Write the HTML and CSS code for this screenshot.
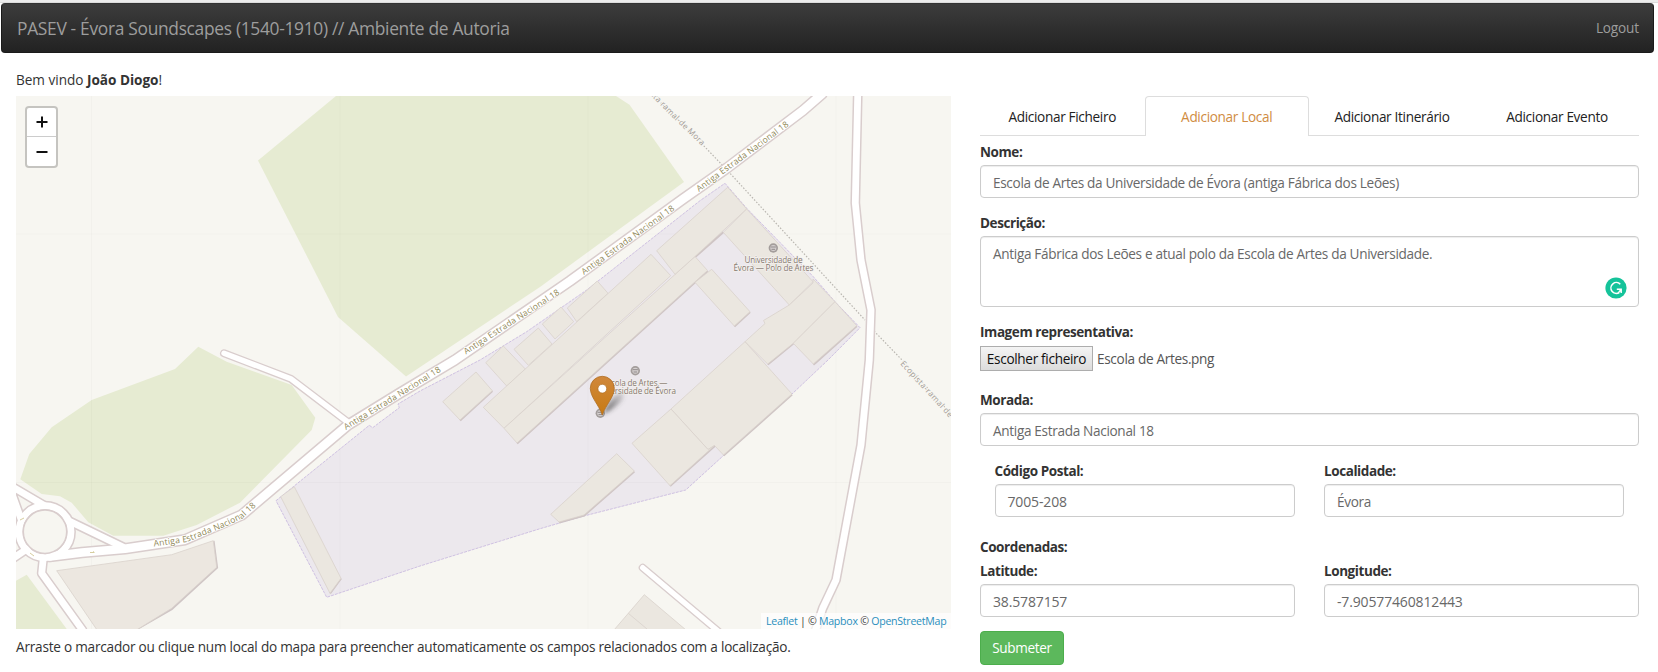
FILE: index.html
```html
<!DOCTYPE html>
<html lang="pt">
<head>
<meta charset="utf-8">
<title>PASEV - Évora Soundscapes</title>
<link rel="stylesheet" href="styles.css">
</head>
<body>
<nav class="navbar">
  <a class="brand">PASEV - Évora Soundscapes (1540-1910) // Ambiente de Autoria</a>
  <a class="logout">Logout</a>
</nav>
<main class="content">
  <section class="map-col">
    <p class="welcome">Bem vindo <b>João Diogo</b>!</p>
    <div class="map">
      <svg class="map-svg" viewBox="16 96 935 533" preserveAspectRatio="none">
        <defs>
          <path id="r1" d="M154 546.500 L187 542 L226 526.500 L243 518 L262 501"/>
          <path id="r2" d="M346 430 L400 397 L444 369.500"/>
          <path id="r3" d="M466 354.500 L563 292"/>
          <path id="r4" d="M584 275 L678 207.500"/>
          <path id="r5" d="M699 192 L792 123.500"/>
          <path id="p1" d="M650 94.500 L672 117 L706 150"/>
          <path id="p2" d="M900 364 L956 425"/>
          <linearGradient id="pin" x1="0" y1="0" x2="0" y2="1"><stop offset="0" stop-color="#d0883c"/><stop offset="1" stop-color="#c87a12"/></linearGradient>
          <filter id="soft" x="-50%" y="-50%" width="200%" height="200%"><feGaussianBlur stdDeviation="2.2"/></filter>
          <linearGradient id="shade" x1="0" y1="1" x2="1" y2="0"><stop offset="0" stop-color="#333" stop-opacity=".8"/><stop offset="1" stop-color="#555" stop-opacity=".15"/></linearGradient>
          <g id="poi"><circle r="4.700" fill="#a39d9b"/><circle r="3" fill="#d5d0d0"/><path d="M-2.600 -1H2.600M-1.800 1.300H1.800" stroke="#8f8989" stroke-width="1"/></g>
        </defs>
        <g class="green">
          <path d="M336 96 258 160.500 338 317 406 376.500 540 287 684 182 629.500 104.700 616 96Z"/>
          <path d="M198.300 346.700 175 369 91.700 400 51.700 427.300 29.300 454 20.300 479.300 41.700 494 60 496.300 71.700 502.700 88.300 522.300 113.300 535.700H163.300L196.700 525 240 502.700 311.700 430 315.300 417.700 291.700 385 226.700 361.700Z"/>
          <path d="M26.700 574.700 16 580.700V629H66.700Z"/>
        </g>
        <path class="campus" d="M276 500.700 369.300 425.300 372.700 427.700 399.300 407.700 398 404 420 391 480 360 526.700 331.700 586.700 290 700 200.700 725 183.300 746.700 208.300 813.300 276.700 835 301.700 860 327.700 828 360 791.700 394.300 723.300 455.700 685.700 490 585 515.700 540 528.700 420 566 326.700 597.300Z"/>
        <g class="tiles"><path d="M91.500 96V629M340 96V629M588 96V629M836 96V629M16 234H951M16 482.500H951"/></g>
        <g class="shadow">
          <path d="M341 578.300 330 593.300M492.300 391 460 420.500M707.500 271 517 443.500M723.500 232 695 257M750 312 734.300 326.500M856.700 326 816 362.500 813.300 364.500M793.300 343.500 767.700 364.500M792 394.500 723.500 455.500M714.700 446 670 486M634.300 471.500 584 515.500 559 522.500M213.500 541 217 567.500 171.700 609 137 629"/>
        </g>
        <g class="building">
          <path d="M280.700 496.700 294.300 486.700 341 578.300 330 593.300Z"/>
          <path d="M476 372 492.300 390.700 460 420 442.700 401.700Z"/>
          <path d="M503.300 346 525.300 369 506.700 386 485.700 362.700Z"/>
          <path d="M538.300 328 552 344 528.300 365.300 514 349.300Z"/>
          <path d="M561 307 573.700 321.700 555 339 542.300 324Z"/>
          <path d="M597.300 281 608 293.300 576.700 321.700 567.300 308Z"/>
          <path d="M651 254.300 670.700 275.700 504 428.300 483.300 407.300Z"/>
          <path d="M504 428.300 695 256.500 707.500 270.500 517 443Z"/>
          <path d="M727.700 187.300 746.700 209 695 256.500 675 274.300 656.700 250.700Z"/>
          <path d="M746.700 209 813 281.700 789.300 305 723.300 232.300Z"/>
          <path d="M711.700 269.300 750 311.700 734.300 326 695 282.300Z"/>
          <path d="M813 279 835 301.700 793.300 343.300 767.700 364 745 341.700 765 323.500 763.500 320.500 789.300 305 813 283Z"/>
          <path d="M835 301.700 856.700 325.700 813.300 364 793.300 343.300Z"/>
          <path d="M671 409 745 341.700 792 394 723.500 455 714.500 445.500 708 449.500Z"/>
          <path d="M671 409 708 449.500 714.500 445.500 670 485.700 632 443.300Z"/>
          <path d="M616.700 453.700 634.300 471 584 515 559 522 550.700 514.300Z"/>
          <path d="M644.300 594.700 686 630H614ZM628.300 613.300 647 629"/>
          <path class="plaza" d="M56.700 570.700 171.700 554.700 213.300 540.700 216.700 567.300 171.700 608.300 137.300 629.500H96.700Z"/>
        </g>
        <path class="foot" d="M654 96 703 145 727 170 865 320M874 331 903 361 951 414"/>
        <g class="casing">
          <path class="w11" d="M50 556.500 82 552.500 125 548.700 185 539.700 241.700 515 348 425 400 393 455 360 570 281 683 199 727 168 803 110.500 822 94"/>
          <path class="w8" d="M224 353.300 290.700 378.700 349 423M642.700 567.700 718 631"/>
          <path class="w10" d="M857.700 94V96L855.300 203 861 260 871 310 869.300 360 861 445 836 580 822.700 608.300 815 632"/>
          <path class="w10" d="M12 486.500 43.300 505M66 519.500 123 547M12 494 21 519M12 559 27 549M43.300 558 41.700 573.300 82.500 630"/>
          <circle class="w10" cx="45" cy="531.700" r="26"/>
        </g>
        <g class="road">
          <path class="w11" d="M50 556.500 82 552.500 125 548.700 185 539.700 241.700 515 348 425 400 393 455 360 570 281 683 199 727 168 803 110.500 822 94"/>
          <path class="w8" d="M224 353.300 290.700 378.700 349 423M642.700 567.700 718 631"/>
          <path class="w10" d="M857.700 94V96L855.300 203 861 260 871 310 869.300 360 861 445 836 580 822.700 608.300 815 632"/>
          <path class="w10" d="M12 486.500 43.300 505M66 519.500 123 547M12 494 21 519M12 559 27 549M43.300 558 41.700 573.300 82.500 630"/>
          <circle class="w10" cx="45" cy="531.700" r="26"/>
        </g>
        <circle class="island" cx="45" cy="531.700" r="21.700"/>
        <path class="arrows" d="M20 520 24 518M30 553 34 556M90 552.500H94M93 551.500 94.500 552.500"/>
        <g class="street">
          <text><textPath href="#r1" textLength="112">Antiga Estrada Nacional 18</textPath></text>
          <text><textPath href="#r2" textLength="112">Antiga Estrada Nacional 18</textPath></text>
          <text><textPath href="#r3" textLength="112">Antiga Estrada Nacional 18</textPath></text>
          <text><textPath href="#r4" textLength="112">Antiga Estrada Nacional 18</textPath></text>
          <text><textPath href="#r5" textLength="112">Antiga Estrada Nacional 18</textPath></text>
        </g>
        <g class="path-name">
          <text><textPath href="#p1" textLength="73">sta ramal-de Mora</textPath></text>
          <text><textPath href="#p2" textLength="76">Ecopista-ramal de-</textPath></text>
        </g>
        <use href="#poi" x="773.300" y="248"/><use href="#poi" x="635.300" y="370.700"/><use href="#poi" x="600.300" y="413.300"/>
        <g class="poi-name">
          <text x="744.500" y="263" textLength="58">Universidade de</text>
          <text x="733.500" y="271" textLength="80">Évora — Polo de Artes</text>
          <text x="603" y="385.500" textLength="64.500">Escola de Artes —</text>
          <text x="594" y="393.500" textLength="82">Universidade de Évora</text>
        </g>
        <path d="M603 414 C609 400 616 392 622 393 C628 397 616 408 603 414Z" fill="url(#shade)" filter="url(#soft)"/>
        <path d="M602.300 415 C599 405 590.300 397 590.300 388.300 A12 12 0 0 1 614.300 388.300 C614.300 397 605.600 405 602.300 415Z" fill="url(#pin)" stroke="#b06f24" stroke-width=".8"/>
        <circle cx="602.300" cy="388.700" r="4.400" fill="#fff" stroke="#b06f24" stroke-width=".7"/>
      </svg>
      <div class="zoom">
        <span><svg viewBox="0 0 12 12"><path d="M6 .5V11.500M.5 6H11.500"/></svg></span>
        <span><svg viewBox="0 0 12 12"><path d="M.5 6H11.500"/></svg></span>
      </div>
      <div class="attribution"><a>Leaflet</a> | © <a>Mapbox</a> © <a>OpenStreetMap</a></div>
    </div>
    <p class="hint">Arraste o marcador ou clique num local do mapa para preencher automaticamente os campos relacionados com a localização.</p>
  </section>
  <form class="form-col">
    <div class="tabs">
      <a class="tab">Adicionar Ficheiro</a>
      <a class="tab active">Adicionar Local</a>
      <a class="tab">Adicionar Itinerário</a>
      <a class="tab">Adicionar Evento</a>
    </div>
    <div class="group nome"><label>Nome:</label><div class="control">Escola de Artes da Universidade de Évora (antiga Fábrica dos Leões)</div></div>
    <div class="group desc"><label>Descrição:</label>
      <div class="control area">Antiga Fábrica dos Leões e atual polo da Escola de Artes da Universidade.
        <svg class="grammar" viewBox="0 0 22 22"><circle cx="11" cy="11" r="10.600" fill="#15c39a"/><path d="M15.300 7.300 A5.400 5.400 0 1 0 14.300 15.500M11.800 12.300H16.200V16M16.200 12.300 13.500 15.600" fill="none" stroke="#fff" stroke-width="1.500"/></svg>
      </div>
    </div>
    <div class="group file"><label>Imagem representativa:</label>
      <div class="file-row"><span class="file-btn">Escolher ficheiro</span><span class="file-name">Escola de Artes.png</span></div>
    </div>
    <div class="group morada"><label>Morada:</label><div class="control">Antiga Estrada Nacional 18</div></div>
    <div class="pair inset">
      <div class="group"><label>Código Postal:</label><div class="control numeric">7005-208</div></div>
      <div class="group"><label>Localidade:</label><div class="control">Évora</div></div>
    </div>
    <label class="coords">Coordenadas:</label>
    <div class="pair">
      <div class="group"><label>Latitude:</label><div class="control numeric">38.5787157</div></div>
      <div class="group"><label>Longitude:</label><div class="control numeric">-7.90577460812443</div></div>
    </div>
    <span class="submit">Submeter</span>
  </form>
</main>
</body>
</html>
```
FILE: styles.css
```css
* { box-sizing: border-box; }
body {
  margin: 0;
  padding: 3px 4px 0 1px;
  height: 672px;
  overflow: hidden;
  background: linear-gradient(#ececec 0 2px, #dcdcdc 2px 3px, #fff 3px);
  color: #333;
  font: 13.600px/20px "Open Sans", "Noto Sans", sans-serif;
  letter-spacing: -.33px;
}
p { margin: 0; white-space: nowrap; }
.navbar {
  display: flex;
  justify-content: space-between;
  height: 50px;
  padding: 0 14px 0 15px;
  border-radius: 4px;
  border: 1px solid #1a1a1a;
  border-top-color: #333;
  background: linear-gradient(#3c3c3c, #222);
  color: #9d9d9d;
  line-height: 46px;
}
.brand { font-size: 17.400px; letter-spacing: -.32px; line-height: 48px; }
.logout { line-height: 47px; letter-spacing: -.15px; }
.content { display: grid; grid-template-columns: 935px 659px; column-gap: 29px; padding: 16px 0 0 15px; }
.map-col { display: flex; flex-direction: column; }
.welcome { height: 27px; line-height: 22px; letter-spacing: -.02px; }
.map { position: relative; height: 533px; background: #f7f6f1; overflow: hidden; }
.map-svg { display: block; width: 935px; height: 533px; letter-spacing: 0; }
.green { fill: #e6ebd2; }
.campus { fill: #ece8ed; stroke: #cfc1e2; stroke-width: 1; stroke-dasharray: 3 1; }
.tiles { fill: none; stroke: #000; stroke-opacity: .018; }
.shadow { fill: none; stroke: #cfc5c5; stroke-width: 2.200; }
.building { fill: #ebe7e0; stroke: #d9d2cb; stroke-width: .8; }
.plaza { fill: #ece7e0; }
.foot { fill: none; stroke: #b9b6b0; stroke-width: 1.200; stroke-dasharray: 1.500 1.700; }
.casing, .road { fill: none; stroke-linecap: round; stroke-linejoin: round; }
.casing { stroke: #d9cdcd; }
.road { stroke: #fff; }
.casing .w11 { stroke-width: 11.500; }
.road .w11 { stroke-width: 8.500; }
.casing .w10 { stroke-width: 9.800; }
.road .w10 { stroke-width: 6.800; }
.casing .w8 { stroke-width: 8; }
.road .w8 { stroke-width: 5.400; }
.island { fill: #f7f6f1; stroke: #d9cdcd; stroke-width: 1.500; }
.arrows { stroke: #d6cd9e; fill: none; }
.street { font-size: 8.600px; fill: #8f8756; stroke: #fff; stroke-width: 1.500; paint-order: stroke; }
.path-name { font-size: 8px; fill: #a19a94; stroke: #f7f6f1; stroke-width: 2; paint-order: stroke; }
.poi-name { font-size: 8.200px; fill: #86796e; stroke: #f3f0ee; stroke-width: 1.500; paint-order: stroke; }
.zoom {
  position: absolute;
  left: 9px;
  top: 10px;
  width: 33px;
  height: 62px;
  border: 2px solid rgba(0, 0, 0, .2);
  border-radius: 4px;
  background: #fff;
  background-clip: padding-box;
}
.zoom span { display: flex; height: 29px; align-items: center; justify-content: center; }
.zoom span:first-child { border-bottom: 1px solid #ccc; }
.zoom svg { width: 12px; height: 12px; fill: none; stroke: #111; stroke-width: 2; }
.attribution {
  position: absolute;
  right: 0;
  bottom: 0;
  width: 190px;
  height: 16px;
  padding: 0 5px;
  background: rgba(255, 255, 255, .7);
  font-size: 10.600px;
  letter-spacing: -.27px;
  line-height: 17px;
  white-space: nowrap;
}
.attribution a { color: #2a8fbd; }
.hint { padding-top: 8px; letter-spacing: -.22px; font-weight: 500; }
.form-col { display: flex; flex-direction: column; padding-top: 27px; }
.tabs { display: grid; grid-template-columns: 164.500px 164.500px 166px 164px; grid-template-rows: 40px; height: 40px; }
.tab { border-bottom: 1px solid #ddd; text-align: center; line-height: 41px; height: 40px; color: #222; }
.tab.active { border: 1px solid #ddd; border-bottom: 0; border-radius: 4px 4px 0 0; line-height: 39px; color: #d08c42; }
.group { display: flex; flex-direction: column; }
label { font-weight: 700; font-size: 13.500px; line-height: 22px; height: 24px; letter-spacing: -.42px; }
.control {
  height: 33px;
  padding: 0 12px;
  border: 1px solid #ccc;
  border-radius: 4px;
  box-shadow: inset 0 1px 1px rgba(0, 0, 0, .075);
  color: #686868;
  line-height: 33px;
  white-space: nowrap;
  background: #fff;
}
.numeric { font-size: 14px; letter-spacing: -.15px; }
.nome { margin-top: 5px; }
.desc { margin-top: 14px; }
.area { position: relative; height: 71px; padding-top: 6px; line-height: 21px; }
.grammar { position: absolute; right: 11px; bottom: 7px; width: 22px; height: 22px; }
.file { margin-top: 14px; }
.file-row { display: flex; gap: 4px; height: 25px; align-items: center; margin-top: 1px; }
.file-btn { width: 113px; height: 25px; border: 1px solid #adadad; background: linear-gradient(#f4f4f4, #dcdcdc); color: #111; text-align: center; line-height: 23px; white-space: nowrap; }
.file-name { color: #555; }
.morada { margin-top: 18px; }
.pair { display: grid; grid-template-columns: 314.500px 315px; column-gap: 29.500px; }
.inset { grid-template-columns: 300px 300px; padding-left: 14.500px; margin-top: 14px; }
.coords { margin-top: 19px; height: 24px; }
.submit {
  width: 84px;
  height: 34px;
  margin-top: 14px;
  border: 1px solid #4cae4c;
  border-radius: 4px;
  background: #5cb85c;
  color: #fff;
  text-align: center;
  line-height: 32px;
}
```
